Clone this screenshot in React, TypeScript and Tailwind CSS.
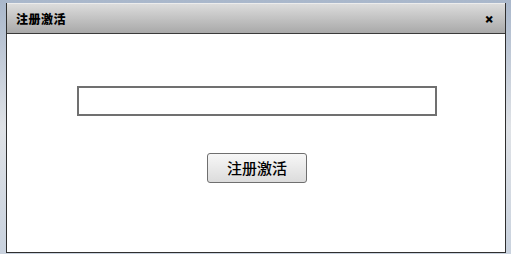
import React from "react";

const font = { fontFamily: '"SimSun", "Noto Sans CJK SC", sans-serif' };

export default function App() {
  return (
    <div className="w-[511px] h-[254px] overflow-hidden bg-gradient-to-b from-[#a9b7cb] via-[#dfe2e6] to-[#c9d2de] pt-[3px] pl-[6px]">
      <div className="w-[500px] h-[250px] flex flex-col border-x border-b border-[#2f2f2f] bg-white">
        {/* title bar */}
        <div className="h-[31px] shrink-0 flex items-center justify-between px-[9px] bg-gradient-to-b from-[#dcdcdc] to-[#a9a9a9] border-b border-[#3a3a3a] border-t border-t-[#ececec]">
          <span
            className="text-[12px] font-black text-black tracking-[0.5px]"
            style={font}
          >
            注册激活
          </span>
          <span className="text-[16px] font-black leading-none text-black mr-[2px]">
            ×
          </span>
        </div>

        {/* body */}
        <div className="flex flex-col items-center pt-[52px]">
          <input
            type="text"
            className="w-[360px] h-[30px] border-2 border-[#707070] bg-white outline-none px-2 text-sm ml-[1px]"
          />
          <button
            type="button"
            className="mt-[37px] ml-[2px] w-[100px] h-[30px] rounded-[3px] border border-[#6f6f6f] bg-gradient-to-b from-[#f7f7f7] to-[#dcdcdc] text-[15px] font-medium text-black flex items-center justify-center"
            style={font}
          >
            注册激活
          </button>
        </div>
      </div>
    </div>
  );
}
